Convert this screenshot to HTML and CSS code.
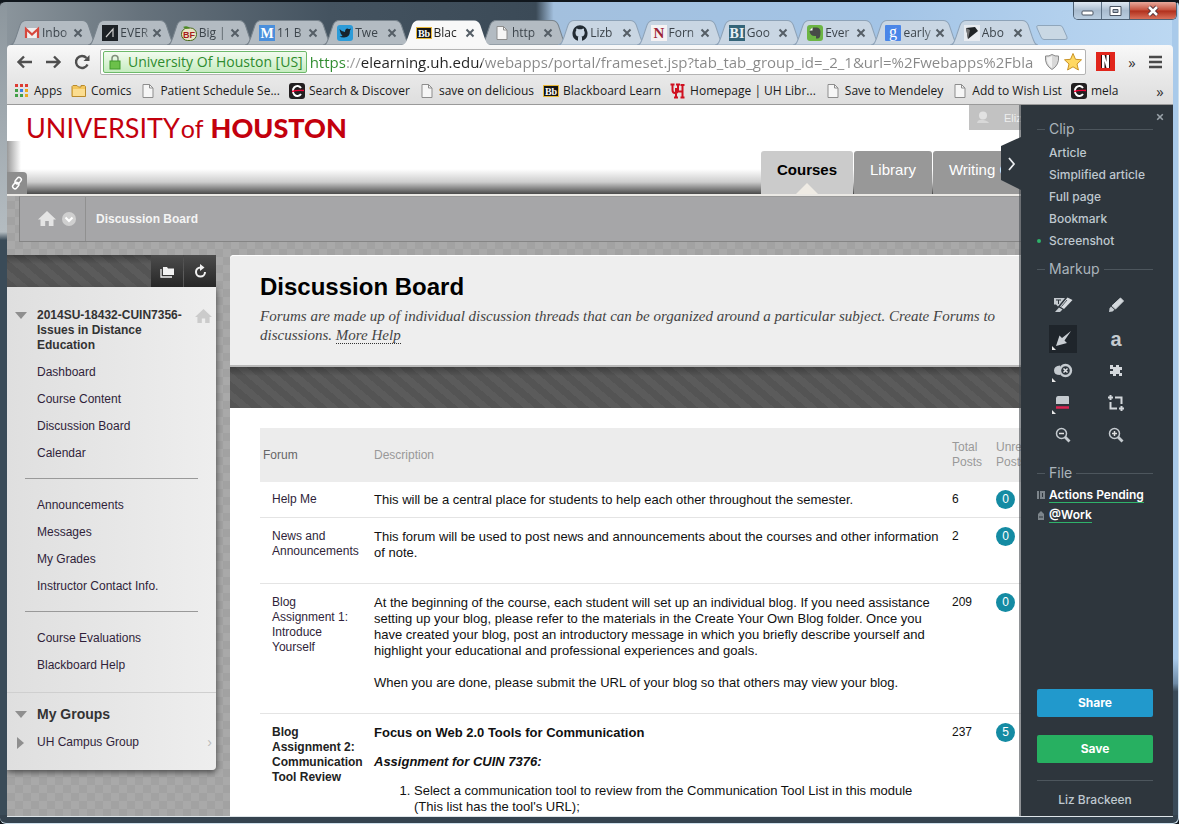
FILE: index.html
```html
<!DOCTYPE html>
<html lang="en">
<head>
<meta charset="utf-8">
<title>Blackboard Learn</title>
<link rel="stylesheet" href="styles.css">
</head>
<body>
<svg class="defs" aria-hidden="true">
  <symbol id="tab" viewBox="0 0 88 25" preserveAspectRatio="none"><path d="M0 25C4 24 4 22 6 17L10 5Q12 .5 16 .5H72Q76 .5 78 5L82 17C84 22 84 24 88 25Z"/></symbol>
  <symbol id="x" viewBox="0 0 10 10"><path d="M1.500 1.500L8.500 8.500M8.500 1.500L1.500 8.500" fill="none" stroke="currentColor" stroke-width="2"/></symbol>
  <symbol id="doc" viewBox="0 0 16 16"><path d="M3 1.500H9.500L13 5V14.500H3Z" fill="#f6f6f6" stroke="#8d8d8d"/><path d="M9.500 1.500V5H13" fill="none" stroke="#8d8d8d"/></symbol>
  <symbol id="bb" viewBox="0 0 16 16"><path d="M0 2H16V14H0Z" fill="#e8b838"/><path d="M1 3H15V13H1Z" fill="#151515"/><text x="8" y="12" text-anchor="middle" font-family="Liberation Serif, serif" font-weight="700" font-size="10" fill="#fff">Bb</text></symbol>
  <symbol id="sd" viewBox="0 0 16 16"><rect width="16" height="16" rx="3" fill="#221f20"/><path d="M12 5A4.500 5 0 1 0 12 11" fill="none" stroke="#fff" stroke-width="2"/><path d="M3 8.500Q7 7 15 7.500" fill="none" stroke="#e03" stroke-width="1.500"/></symbol>
  <symbol id="home" viewBox="0 0 18 16"><path d="M9 0L18 8.500H15.500V15H10.800V10H7.200V15H2.500V8.500H0Z" fill="currentColor"/></symbol>
</svg>

<div class="window">
  <div class="caption">
    <div class="winbtns">
      <button aria-label="Minimize"><svg width="13" height="12"><rect x="1" y="6" width="11" height="4" rx="1" fill="#fff" stroke="#4b5563"/></svg></button>
      <button aria-label="Maximize"><svg width="13" height="12"><path d="M1 1.500H12V10.500H1Z" fill="#fff" stroke="#4b5563"/><path d="M4 4.500H9V7.500H4Z" fill="#aab6c4" stroke="#4b5563"/></svg></button>
      <button class="close" aria-label="Close"><svg width="14" height="12"><path d="M3 2L11 10M11 2L3 10" stroke="#4b3038" stroke-width="4.500"/><path d="M3 2L11 10M11 2L3 10" stroke="#fff" stroke-width="2.500"/></svg></button>
    </div>
  </div>

  <div class="tabstrip">
    <div class="tabs">
      <div class="tab"><svg class="shape"><use href="#tab"/></svg><svg class="fav" viewBox="0 0 16 16"><path d="M1 3H15V13H1Z" fill="#f0eeee"/><path d="M2 13V4L8 9.500L14 4V13" fill="none" stroke="#d6473d" stroke-width="2.200"/></svg><span>Inbo</span><button aria-label="Close tab"><svg><use href="#x"/></svg></button></div>
      <div class="tab"><svg class="shape"><use href="#tab"/></svg><svg class="fav" viewBox="0 0 16 16"><path d="M0 0H16V16H0Z" fill="#1c2126"/><path d="M4 12L11 4V12" fill="none" stroke="#ccc" stroke-width="1.200"/></svg><span>EVER</span><button aria-label="Close tab"><svg><use href="#x"/></svg></button></div>
      <div class="tab"><svg class="shape"><use href="#tab"/></svg><svg class="fav" viewBox="0 0 16 16"><rect x=".5" y="3" width="15" height="12.500" rx="6" fill="#e9e4c4" stroke="#4b6a1c"/><path d="M2 2Q6 0 9 3Q5 5 2 2" fill="#4b8b22"/><text x="8" y="13" text-anchor="middle" font-family="Liberation Sans, sans-serif" font-weight="700" font-size="9" fill="#a61c1c">BF</text></svg><span>Big |</span><button aria-label="Close tab"><svg><use href="#x"/></svg></button></div>
      <div class="tab"><svg class="shape"><use href="#tab"/></svg><svg class="fav" viewBox="0 0 16 16"><path d="M0 0H16V16H0Z" fill="#4a8fdc"/><text x="8" y="13" text-anchor="middle" font-family="Liberation Serif, serif" font-weight="700" font-size="14" fill="#fff">M</text></svg><span>11 B</span><button aria-label="Close tab"><svg><use href="#x"/></svg></button></div>
      <div class="tab"><svg class="shape"><use href="#tab"/></svg><svg class="fav" viewBox="0 0 16 16"><rect width="16" height="16" rx="3" fill="#2c9bd8"/><path d="M2.500 4Q5 7 8 7Q8 3.500 10.500 3.500L12 4.200L14 3.500L13 5.500Q13 12.500 7 12.500Q4 12.500 2.500 11.500Q5 11.300 5.500 10.500Q3.500 9.500 2.500 4Z" fill="#17222b"/></svg><span>Twe</span><button aria-label="Close tab"><svg><use href="#x"/></svg></button></div>
      <div class="tab active"><svg class="shape"><use href="#tab"/></svg><svg class="fav"><use href="#bb"/></svg><span>Blac</span><button aria-label="Close tab"><svg><use href="#x"/></svg></button></div>
      <div class="tab"><svg class="shape"><use href="#tab"/></svg><svg class="fav"><use href="#doc"/></svg><span>http</span><button aria-label="Close tab"><svg><use href="#x"/></svg></button></div>
      <div class="tab light"><svg class="shape"><use href="#tab"/></svg><svg class="fav" viewBox="0 0 16 16"><path d="M8 .3a8 8 0 0 0-2.500 15.400c.4 0 .5-.2.5-.4v-2.500c0-.6.200-1 .5-1.200C4.500 11.300 3.500 10 3.500 7.700c0-.9.300-1.600.8-2.200-.2-.8-.1-1.500.1-2.100.9 0 1.600.4 2.200.9a7 7 0 0 1 3 0c.6-.5 1.300-.9 2.200-.9.200.6.300 1.300.1 2.100.5.600.8 1.300.8 2.200 0 2.300-1.200 3.600-3.200 3.900.3.300.5.700.5 1.200v2.500c0 .2.100.4.500.4A8 8 0 0 0 8 .3Z" fill="#222b33"/></svg><span>Lizb</span><button aria-label="Close tab"><svg><use href="#x"/></svg></button></div>
      <div class="tab light"><svg class="shape"><use href="#tab"/></svg><svg class="fav" viewBox="0 0 16 16"><path d="M0 0H16V16H0Z" fill="#f5f2f3"/><text x="8" y="13" text-anchor="middle" font-family="Liberation Serif, serif" font-weight="700" font-size="15" fill="#9c2438">N</text></svg><span>Forn</span><button aria-label="Close tab"><svg><use href="#x"/></svg></button></div>
      <div class="tab light"><svg class="shape"><use href="#tab"/></svg><svg class="fav" viewBox="0 0 16 16"><path d="M0 0H16V16H0Z" fill="#346478"/><text x="8" y="13" text-anchor="middle" font-family="Liberation Serif, serif" font-weight="700" font-size="14" fill="#e8f0f4">BI</text></svg><span>Goo</span><button aria-label="Close tab"><svg><use href="#x"/></svg></button></div>
      <div class="tab light"><svg class="shape"><use href="#tab"/></svg><svg class="fav" viewBox="0 0 16 16"><rect width="16" height="16" rx="3" fill="#6cb544"/><path d="M2.500 6L6 2.500H10Q13.500 3 13.500 7Q13.500 13.500 11 13.500H9V11H8Q3 11 2.500 6Z" fill="#474c48"/><path d="M2.500 5.500H5.500V2.500Z" fill="#fff"/></svg><span>Ever</span><button aria-label="Close tab"><svg><use href="#x"/></svg></button></div>
      <div class="tab light"><svg class="shape"><use href="#tab"/></svg><svg class="fav" viewBox="0 0 16 16"><rect width="16" height="16" rx="1" fill="#4a86e8"/><text x="8" y="12" text-anchor="middle" font-family="Liberation Serif, serif" font-size="16" fill="#fff">g</text></svg><span>early</span><button aria-label="Close tab"><svg><use href="#x"/></svg></button></div>
      <div class="tab light"><svg class="shape"><use href="#tab"/></svg><svg class="fav" viewBox="0 0 16 16"><path d="M0 0H16V16H0Z" fill="#e7ebf0"/><path d="M2 3L11 2L14 6L4 14Z" fill="#1f2326"/><path d="M2 3L6 5L4 14Z" fill="#777"/></svg><span>Abo</span><button aria-label="Close tab"><svg><use href="#x"/></svg></button></div>
    </div>
    <button class="newtab" aria-label="New tab"><svg width="34" height="17"><path d="M3 1.500H25Q27 1.500 28 4L32 13Q33 15.500 30 15.500H9Q7 15.500 6 13L2 4Q1 1.500 3 1.500Z" fill="#c9d8e4" stroke="#8fa6bb"/></svg></button>
  </div>

  <div class="chrome">
    <div class="toolbar">
      <button aria-label="Back"><svg width="17" height="16"><path d="M8 2.500L2.500 8L8 13.500M3 8H16" fill="none" stroke="#4f4f4f" stroke-width="2.400"/></svg></button>
      <button aria-label="Forward"><svg width="17" height="16"><path d="M9 2.500L14.500 8L9 13.500M14 8H1" fill="none" stroke="#4f4f4f" stroke-width="2.400"/></svg></button>
      <button aria-label="Reload"><svg width="17" height="16"><path d="M13.500 10.500A6 6 0 1 1 12.500 4" fill="none" stroke="#4f4f4f" stroke-width="2.400"/><path d="M15.500 1V7H9.500Z" fill="#4f4f4f"/></svg></button>
      <div class="omnibox">
        <button class="cert"><svg width="12" height="16"><path d="M3 8V4.500Q3 1.500 6 1.500T9 4.500V8" fill="none" stroke="#7f8f7a" stroke-width="1.500"/><rect x="1" y="7" width="10" height="8" fill="#6cc04a" stroke="#3f9a2b"/></svg><span>University Of Houston [US]</span></button>
        <input class="url" type="text" aria-label="Address" value="https://elearning.uh.edu/webapps/portal/frameset.jsp?tab_tab_group_id=_2_1&amp;url=%2Fwebapps%2Fbla">
        <button aria-label="Shield"><svg width="16" height="18"><path d="M8 1.500Q11 3.500 14.500 3Q15.500 12 8 16.500Q.5 12 1.500 3Q5 3.500 8 1.500Z" fill="#d8d8d8" stroke="#8a8a8a"/><path d="M8 3V15Q2.500 11 3 4.500Q6 4.500 8 3Z" fill="#f2f2f2"/></svg></button>
        <button aria-label="Bookmark this page"><svg width="20" height="19"><path d="M10 1.500L12.500 7.300L18.500 7.800L14 12L15.400 18L10 14.800L4.600 18L6 12L1.500 7.800L7.500 7.300Z" fill="#ffd862" stroke="#c99326"/></svg></button>
      </div>
      <button class="ext" aria-label="Netflix"><svg width="19" height="19"><path d="M0 0H19V19H0Z" fill="#e1251b"/><path d="M5 3H14V16H5Z" fill="#2a1010"/><path d="M6 3H8.500L10.500 10V3H13V16H10.500L8.500 9V16H6Z" fill="#fff"/></svg></button>
      <button class="more">»</button>
      <button class="menu" aria-label="Menu"><svg width="14" height="14"><path d="M0 2H13M0 7H13M0 12H13" stroke="#4a4a4a" stroke-width="2.600"/></svg></button>
    </div>
    <nav class="bookmarks">
      <a href="#"><svg viewBox="0 0 16 16"><path d="M1 1h3v3H1zM6 1h3v3H6zM11 1h3v3h-3z" fill="#dd3b32"/><path d="M1 6h3v3H1z" fill="#43a047"/><path d="M6 6h3v3H6z" fill="#3b7ee0"/><path d="M11 6h3v3h-3z" fill="#eba91c"/><path d="M1 11h3v3H1zM6 11h3v3H6z" fill="#43a047"/><path d="M11 11h3v3h-3z" fill="#eba91c"/></svg>Apps</a>
      <a href="#"><svg viewBox="0 0 16 16"><path d="M1 13.500V3.500L2 2.500H6L7.500 4H10V2.500H13.500L14.500 3.500V13.500Z" fill="#f3c65c" stroke="#b98a2c"/><path d="M2 6H14V13H2Z" fill="#fbdd90"/></svg>Comics</a>
      <a href="#"><svg><use href="#doc"/></svg>Patient Schedule Se...</a>
      <a href="#"><svg><use href="#sd"/></svg>Search &amp; Discover</a>
      <a href="#"><svg><use href="#doc"/></svg>save on delicious</a>
      <a href="#"><svg><use href="#bb"/></svg>Blackboard Learn</a>
      <a href="#"><svg viewBox="0 0 16 16"><path d="M2.500 1V7Q2.500 10 5 10T8 7V1M.5 1.500H4.500M6 1.500H10M6 5V15M12.500 2V15M6 8.500H12.500M4 14.500H8M10.500 14.500H14.500M10.500 2H14.500" fill="none" stroke="#cf1020" stroke-width="2"/></svg>Homepage | UH Libr...</a>
      <a href="#"><svg><use href="#doc"/></svg>Save to Mendeley</a>
      <a href="#"><svg><use href="#doc"/></svg>Add to Wish List</a>
      <a href="#"><svg><use href="#sd"/></svg>mela</a>
      <button class="more">»</button>
    </nav>
  </div>

  <div class="viewport">
    <div class="page">
      <header class="banner">
        <div class="brand"><span class="thin">UNIVERSITY</span><span class="of">of</span><span class="fat">HOUSTON</span></div>
        <div class="user"><svg width="12" height="13"><circle cx="6" cy="4.500" r="4" fill="#e2e2e2"/><path d="M0 12Q1 8 6 9T12 12Z" fill="#d8d8d8"/></svg>Elizabeth Brackeen</div>
        <button class="link" aria-label="Quick links"><svg width="14" height="14"><g fill="none" stroke="#fff" stroke-width="1.500"><rect x="6" y="1" width="4.500" height="7" rx="2.200" transform="rotate(40 8 4.500)"/><rect x="3.500" y="6" width="4.500" height="7" rx="2.200" transform="rotate(40 5.700 9.500)"/></g></svg></button>
        <nav class="sections">
          <a class="on" href="#">Courses</a><a href="#">Library</a><a class="wide" href="#">Writing Center</a>
        </nav>
      </header>
      <div class="crumbs">
        <div class="crumbicons"><svg width="18" height="16"><use href="#home"/></svg><svg width="14" height="14"><circle cx="7" cy="7" r="7" fill="#cfcfcf"/><path d="M3.500 5.500L7 9L10.500 5.500" fill="none" stroke="#fff" stroke-width="2"/></svg></div>
        <a href="#">Discussion Board</a>
      </div>
      <div class="columns">
        <aside class="side">
          <div class="sidebar-top">
            <button aria-label="Folder view"><svg width="15" height="13"><path d="M3 2H7L8 3.500H14V10H3Z" fill="#f2f2f2"/><path d="M1 4V12H12" fill="none" stroke="#f2f2f2" stroke-width="1.300"/></svg></button>
            <button aria-label="Refresh"><svg width="13" height="14"><path d="M11 8A4.500 4.500 0 1 1 6.500 3.500" fill="none" stroke="#f2f2f2" stroke-width="2"/><path d="M6 0L10.500 3.500L6 7Z" fill="#f2f2f2"/></svg></button>
          </div>
          <div class="sidebar">
            <h2 class="course"><svg class="tri" width="12" height="7"><path d="M0 0H12L6 7Z" fill="#8f8f8f"/></svg><a href="#">2014SU-18432-CUIN7356-<br>Issues in Distance<br>Education</a><svg class="sidehome" width="17" height="15"><use href="#home"/></svg></h2>
            <ul><li><a href="#">Dashboard</a></li><li><a href="#">Course Content</a></li><li><a href="#">Discussion Board</a></li><li><a href="#">Calendar</a></li></ul>
            <hr>
            <ul><li><a href="#">Announcements</a></li><li><a href="#">Messages</a></li><li><a href="#">My Grades</a></li><li><a href="#">Instructor Contact Info.</a></li></ul>
            <hr>
            <ul><li><a href="#">Course Evaluations</a></li><li><a href="#">Blackboard Help</a></li></ul>
            <div class="groups">
              <h2><svg class="tri" width="12" height="7"><path d="M0 0H12L6 7Z" fill="#8f8f8f"/></svg>My Groups</h2>
              <a href="#"><svg class="tri" width="7" height="12"><path d="M0 0V12L7 6Z" fill="#8f8f8f"/></svg>UH Campus Group<span class="chev">›</span></a>
            </div>
          </div>
        </aside>
        <main class="main">
          <div class="intro">
            <h1>Discussion Board</h1>
            <p>Forums are made up of individual discussion threads that can be organized around a particular subject. Create Forums to<br>discussions. <a href="#">More Help</a></p>
          </div>
          <div class="actionbar"></div>
          <table>
            <thead><tr><th class="c1">Forum</th><th>Description</th><th class="c3">Total Posts</th><th class="c4">Unread<br>Posts</th></tr></thead>
            <tbody>
              <tr class="short"><td class="forum">Help Me</td><td>This will be a central place for students to help each other throughout the semester.</td><td class="num">6</td><td><a class="count" href="#">0</a></td></tr>
              <tr><td class="forum">News and Announcements</td><td>This forum will be used to post news and announcements about the courses and other information<br>of note.</td><td class="num">2</td><td><a class="count" href="#">0</a></td></tr>
              <tr><td class="forum">Blog<br>Assignment 1:<br>Introduce<br>Yourself</td><td>At the beginning of the course, each student will set up an individual blog. If you need assistance<br>setting up your blog, please refer to the materials in the Create Your Own Blog folder. Once you<br>have created your blog, post an introductory message in which you briefly describe yourself and<br>highlight your educational and professional experiences and goals.<br><br>When you are done, please submit the URL of your blog so that others may view your blog.</td><td class="num">209</td><td><a class="count" href="#">0</a></td></tr>
              <tr><td class="forum"><b>Blog<br>Assignment 2:<br>Communication<br>Tool Review</b></td><td class="rich"><h3>Focus on Web 2.0 Tools for Communication</h3><h4>Assignment for CUIN 7376:</h4><ol><li>Select a communication tool to review from the Communication Tool List in this module<br>(This list has the tool's URL);</li></ol></td><td class="num">237</td><td><a class="count" href="#">5</a></td></tr>
            </tbody>
          </table>
        </main>
      </div>
    </div>

    <aside class="clipper">
      <button class="handle" aria-label="Collapse"><svg width="20" height="53"><path d="M20 0L0 9V43L20 53Z" fill="#2e363d"/><path d="M8 21L13 27L8 33" fill="none" stroke="#e8ebee" stroke-width="1.800"/></svg></button>
      <button class="shut" aria-label="Close clipper"><svg width="8" height="8"><use href="#x"/></svg></button>
      <h5>Clip</h5>
      <ul class="modes">
        <li><button>Article</button></li><li><button>Simplified article</button></li><li><button>Full page</button></li><li><button>Bookmark</button></li><li class="sel"><button>Screenshot</button></li>
      </ul>
      <h5>Markup</h5>
      <div class="tools">
        <button aria-label="Highlight text"><svg viewBox="0 0 28 28"><path d="M5 7H16L9 15.500L7 13.500H5Z" fill="#c5cbd0"/><path d="M7 9H12M9.500 9V13" stroke="#2e363d"/><path d="M18.500 6.500L23.500 9L15 18L11 15.500Z" fill="#d8dce0"/><path d="M18 9L12.500 15.500" stroke="#2e363d" stroke-width=".8"/><path d="M10 16.500L13.500 18.500L11 21H6Z" fill="#c5cbd0"/></svg></button>
        <button aria-label="Marker"><svg viewBox="0 0 28 28"><path d="M18.500 7L21.500 10L13.500 18L10 14.800Z" fill="#d3d8dc" stroke="#d3d8dc" stroke-linejoin="round"/><path d="M9 15.500L12.500 18.700L10.500 20.500L7 21L7.500 17.500Z" fill="#c5cbd0"/></svg></button>
        <button class="picked" aria-label="Arrow"><svg viewBox="0 0 28 28"><path d="M22 6L15.500 15.500L18 18L7 21L10.500 10.500L13 13Z" fill="#c9ced3"/><path d="M3 21V25H7Z" fill="#e8e8e8"/></svg></button>
        <button class="letter" aria-label="Text">a</button>
        <button aria-label="Stamp"><svg viewBox="0 0 28 28"><path d="M11 8.500Q5 9 5 13.500T11 18Z" fill="#c5cbd0"/><circle cx="16.500" cy="13.500" r="5.500" fill="#2e363d" stroke="#c5cbd0" stroke-width="2.400"/><path d="M14.500 11.500L18.500 15.500M18.500 11.500L14.500 15.500" stroke="#e2e5e8" stroke-width="1.500"/><path d="M3 21V25H7Z" fill="#e8e8e8"/></svg></button>
        <button aria-label="Pixelate"><svg viewBox="0 0 28 28"><path d="M8 8h3v2h3V8h3v2h3v3h-2v3h2v3h-3v-2h-3v2h-3v-2H8v-3h3v-2H8z" fill="#d3d8dc"/></svg></button>
        <button aria-label="Colour"><svg viewBox="0 0 28 28"><path d="M9 7H19Q20 7 20 8V15H7V9Q7.500 7 9 7Z" fill="#c5cbd0"/><path d="M7 18.500H20" stroke="#dd2452" stroke-width="2.500"/><path d="M3 21V25H7Z" fill="#e8e8e8"/></svg></button>
        <button aria-label="Crop"><svg viewBox="0 0 28 28"><path d="M6 8.500H11M8.500 6V11M13 8.500H19.500V15M8.500 13V19.500H15M19.500 17V22M17 19.500H22" fill="none" stroke="#d3d8dc" stroke-width="2"/></svg></button>
        <button aria-label="Zoom out"><svg viewBox="0 0 28 28"><circle cx="12.500" cy="12.500" r="5" fill="none" stroke="#c5cbd0" stroke-width="1.500"/><path d="M10 12.500H15" stroke="#e0e0e0" stroke-width="1.500"/><path d="M16 16L20.500 20.500" stroke="#c5cbd0" stroke-width="2.800"/></svg></button>
        <button aria-label="Zoom in"><svg viewBox="0 0 28 28"><circle cx="12.500" cy="12.500" r="5" fill="none" stroke="#c5cbd0" stroke-width="1.500"/><path d="M10 12.500H15M12.500 10V15" stroke="#e0e0e0" stroke-width="1.500"/><path d="M16 16L20.500 20.500" stroke="#c5cbd0" stroke-width="2.800"/></svg></button>
      </div>
      <h5>File</h5>
      <div class="file"><svg width="8" height="8"><path d="M0 0H8V8H0Z" fill="#7d858b"/><path d="M2.500 0V8M5.500 2V6" stroke="#2e363d"/></svg><a href="#">Actions Pending</a></div>
      <div class="file"><svg width="8" height="9"><path d="M1 9V3L4 0L7 3V9Z" fill="#7d858b"/><path d="M2 6H6" stroke="#2e363d"/></svg><a href="#">@Work</a></div>
      <div class="foot">
        <button class="share">Share</button>
        <button class="save">Save</button>
        <div class="who">Liz Brackeen</div>
      </div>
    </aside>
  </div>
</div>
</body>
</html>
```
FILE: styles.css
```css
* { box-sizing: border-box; }
body { margin: 0; font-family: "Liberation Sans", Arial, sans-serif; font-size: 12px; background: #10161c; }
button { padding: 0; border: 0; background: none; font: inherit; color: inherit; display: flex; align-items: center; justify-content: center; }
a { color: inherit; text-decoration: none; }
h1, h2, h3, h4, h5, p, ul { margin: 0; padding: 0; }
ul { list-style: none; }
svg { display: block; flex: none; }
.defs { display: none; }

.window {
  height: 100vh; display: flex; flex-direction: column; overflow: hidden;
  padding: 0 5px 6px 7px; border: 1px solid #cfe0ec; border-top: 2px solid #10161c; border-width: 2px 1px 1px 0; border-radius: 6px;
  background:
    linear-gradient(#35434f, #35434f) bottom / 100% 8px no-repeat,
    linear-gradient(#a9caea 0 80%, #6f8ba6 83%, #3a4a58 84%) right / 6px 100% no-repeat,
    linear-gradient(#8c969d 0, #b4bcc1 28%, #3a4b58 29% 100%) left / 7px 100% no-repeat,
    linear-gradient(90deg, #8c969d 0, #66727c 12%, #445360 28%, #3b4a57 45.500%, #a3c0de 47%, #a3c4e6 75%, #bcd8f2 100%);
}
.caption { height: 18px; flex: none; display: flex; justify-content: flex-end; margin-right: -4px; }
.winbtns { display: flex; height: 18px; border: 1px solid #4d6073; border-top: 0; border-radius: 0 0 5px 5px; overflow: hidden; }
.winbtns button { width: 28px; border-right: 1px solid #5c7084; background: linear-gradient(#dfe9f3, #a9bccf 50%, #b9cde0); }
.winbtns .close { width: 46px; border: 0; background: linear-gradient(#e9a99c, #c5503c 48%, #b02f1c 52%, #d9705a); }

.tabstrip { display: flex; flex: none; height: 25px; padding-left: 3px; }
.tabs { display: flex; flex: 0 1 1028px; min-width: 0; }
.tab { position: relative; flex: 1 1 0; min-width: 0; height: 25px; margin-right: -10px; display: grid; grid-template-columns: 16px 1fr 10px; align-items: center; column-gap: 2px; padding: 0 15px 0 14px; isolation: isolate; font: 12px/17px "Open Sans", "Noto Sans", sans-serif; color: #3c444b; }
.tab:last-child { margin-right: 0; }
.tab .shape { position: absolute; inset: 0; width: 100%; height: 25px; z-index: -1; fill: #b3bbc2; stroke: #78838c; stroke-width: 1; }
.tab.light .shape { fill: #c9d6e3; stroke: #8ea3b8; }
.tab.active { z-index: 2; color: #222; }
.tab.active .shape { fill: #f8f8f8; stroke: none; }
.tab .fav { width: 16px; height: 16px; }
.tab span { white-space: nowrap; mask-image: linear-gradient(90deg, #000 70%, rgba(0, 0, 0, .35)); }
.tab button, .tab button svg { width: 10px; height: 10px; color: #555e66; }
.newtab { align-self: center; margin-left: -3px; }

.chrome { flex: none; background: linear-gradient(#f8f8f8, #e9e9e9 50%, #dedede); border-bottom: 1px solid #9a9a9a; border-radius: 4px 4px 0 0; }
.toolbar { display: flex; align-items: center; height: 33px; padding: 0 10px 0 9px; gap: 12px; }
.omnibox { flex: 1; min-width: 0; display: flex; align-items: center; height: 26px; gap: 3px; padding: 0 2px; margin-left: -3px; border: 1px solid #b3b3b3; border-radius: 2px; background: #fff; font: 15px/22px "Open Sans", "Noto Sans", sans-serif; }
.omnibox > button + button { flex: none; }
.cert { flex: none; height: 22px; padding: 0 3px 0 5px; gap: 7px; border: 1px solid #6db96a; border-radius: 2px; background: linear-gradient(#f2fbef, #c6ecc0); color: #2e8b2e; white-space: nowrap; font-size: 14px; }
.url { flex: 1; min-width: 0; height: 22px; padding: 0; border: 0; outline: 0; font: inherit; color: transparent; background: linear-gradient(90deg, #2e8b2e 0 37px, #999 37px 51px, #222 51px 172px, #888 172px); -webkit-background-clip: text; background-clip: text; }
.more { width: 10px; font: 15px/16px "Open Sans", sans-serif; color: #333; }
.ext { margin-left: -2px; }
.bookmarks { display: flex; align-items: center; height: 26px; padding: 0 8px 0 7px; font: 12px/16px "Open Sans", "Noto Sans", sans-serif; color: #1c1c1c; gap: 9px; }
.bookmarks a { display: flex; align-items: center; gap: 4px; white-space: nowrap; }
.bookmarks svg { width: 16px; height: 16px; }
.bookmarks .more { margin-left: auto; }

.viewport { flex: 1; min-height: 0; display: grid; grid-template: minmax(0, 1fr) / minmax(0, 1fr); border-bottom: 1px solid #dfe6ea; }
.page, .clipper { grid-area: 1 / 1; }
.page { overflow: hidden; background: repeating-conic-gradient(#a9a9a9 0 25%, #a2a2a2 0 50%) 0 0 / 16px 16px; }

.banner { position: relative; height: 91px; border-bottom: 2px solid #ebe9e5; background: linear-gradient(transparent 64px, rgba(90, 90, 90, .3) 77px, #4a4a4a 89px), linear-gradient(90deg, #999, transparent 14px) 0 36px no-repeat, #fff; display: grid; grid-template: 46px 43px / 1fr auto; }
.brand { display: flex; align-items: baseline; padding: 5px 0 0 19px; color: #c3000d; font-family: Lato, sans-serif; font-size: 27px; line-height: 36px; }
.thin { font-weight: 400; }
.of { font-size: 25px; margin: 0 7px 0 1px; }
.fat { font-weight: 900; }
.user { justify-self: end; display: flex; gap: 15px; align-items: center; width: 204px; height: 25px; padding-left: 8px; background: #c2c2c2; color: #eee; font-size: 11px; }
.link { align-self: end; width: 20px; height: 22px; background: #8d8d8d; border-radius: 0 4px 0 0; }
.sections { display: flex; width: 412px; gap: 1px; color: #fff; font-size: 15px; line-height: 38px; }
.sections a { background: #989898; padding: 0 16px; border-radius: 3px 3px 0 0; white-space: nowrap; }
.sections .on { background: #cbcbcb; color: #000; font-weight: 700; position: relative; }
.sections .on::after { content: ""; position: absolute; left: 50%; bottom: 0; margin-left: -11px; border: 11px solid transparent; border-top: 0; border-bottom-color: #efebe4; }
.sections .wide { flex: 1; }

.crumbs { display: flex; height: 46px; margin-left: 12px; background: #a6a6a8; border: 1px solid #848484; border-top-color: #999; color: #f4f4f4; font-weight: 700; align-items: center; }
.crumbicons { display: flex; align-items: center; gap: 6px; height: 100%; padding: 0 9px 0 18px; margin-right: 10px; border-right: 1px solid #909090; color: #e4e4e4; }

.columns { display: flex; gap: 14px; padding-top: 13px; align-items: flex-start; }
.side { flex: 0 0 209px; }
.sidebar-top, .actionbar { background: linear-gradient(rgba(0, 0, 0, .25), transparent 9px), repeating-linear-gradient(40deg, #545454 0 7px, #5b5b5b 7px 14px); }
.sidebar-top { display: flex; justify-content: flex-end; gap: 1px; height: 32px; }
.sidebar-top button { width: 32px; background: linear-gradient(#4c4c4c, #272727); }
.sidebar { background: linear-gradient(90deg, #dfdfdf, #eee); color: #333; padding: 21px 0 14px; border-radius: 0 0 4px 0; box-shadow: 0 2px 6px #444; }
.sidebar h2 { font-size: 12px; line-height: 15px; display: flex; align-items: flex-start; }
.course { padding-bottom: 6px; white-space: nowrap; }
.tri { margin: 4px 10px 0 8px; }
.sidehome { color: #cbcbcb; margin: 1px 4px 0 auto; }
.sidebar li, .groups a { line-height: 27px; color: #301f3a; }
.sidebar li { padding-left: 30px; }
.sidebar hr { margin: 11px 18px 13px; border: 0; border-top: 1px solid #999; }
.groups { margin-top: 13px; border-top: 1px solid #cfcfcf; padding-top: 14px; }
.groups h2 { font-size: 14px; padding-bottom: 7px; }
.groups a { display: flex; align-items: center; }
.groups a .tri { margin: 0 13px 0 10px; }
.chev { margin: 0 4px 0 auto; color: #bbb; font-size: 14px; }

.main { flex: 1; min-width: 0; background: #fff; border-radius: 4px 0 0 0; min-height: 600px; }
.intro { height: 112px; padding: 16px 0 0 30px; background: #eee; border-radius: 4px 0 0 0; border-bottom: 2px solid #b9b9b9; border-top: 1px solid #fff; white-space: nowrap; }
h1 { font-size: 24px; line-height: 30px; color: #000; }
.intro p { font: italic 15px/19px "Liberation Serif", Georgia, serif; color: #444; padding-top: 5px; }
.intro p a { border-bottom: 1px dotted #333; }
.actionbar { height: 41px; margin-bottom: 20px; }
table { width: calc(100% - 60px); margin-left: 30px; table-layout: fixed; border-collapse: collapse; }
th { height: 54px; background: #ececec; color: #999; font-weight: 400; line-height: 15px; text-align: left; padding: 0 3px; vertical-align: middle; }
th.c1 { width: 111px; color: #666; }
th.c3 { width: 44px; }
th.c4 { width: 150px; }
td { padding: 11px 3px 22px; border-bottom: 1px solid #e4e4e4; vertical-align: top; line-height: 16px; font-size: 13px; color: #111; white-space: nowrap; }
.short td { padding-top: 10px; padding-bottom: 9px; }
td.forum { padding-left: 12px; line-height: 15px; font-size: 12px; color: #301f3a; white-space: normal; }
td.num { font-size: 12px; line-height: 15px; }
.forum b { color: #222; }
.count { display: block; width: 19px; height: 19px; margin: -2px 0 -3px; border-radius: 50%; background: #148ba3; color: #fff; font-size: 12px; line-height: 19px; text-align: center; }
h3, h4 { font-size: 13px; line-height: 16px; margin-bottom: 13px; }
h4 { font-style: italic; }
.rich ol { margin: 0; padding-left: 40px; }

.clipper { justify-self: end; position: relative; width: 154px; padding: 16px 20px 5px 16px; background: #2e363d; background-clip: padding-box; border-left: 2px solid rgba(70, 75, 80, .6); color: #bfc8cf; font: 500 12px/22px Inter, sans-serif; display: flex; flex-direction: column; }
.handle { position: absolute; left: -20px; top: 32px; }
.shut { position: absolute; right: 9px; top: 8px; color: #9aa3aa; }
h5 { display: flex; align-items: center; gap: 4px; font: 400 14px/16px Inter, sans-serif; color: #aab4bb; }
h5::before, h5::after { content: ""; height: 1px; background: #4d565d; width: 8px; }
h5::after { flex: 1; }
.modes { padding: 5px 0 9px; }
.modes li { display: flex; gap: 8px; }
.modes li::before { content: ""; width: 4px; height: 4px; border-radius: 50%; margin-top: 9px; }
.modes .sel::before { background: #2fb26a; }
.tools { display: grid; grid-template: 30px / 28px 28px; gap: 4px 25px; padding: 14px 0 16px 12px; }
.tools button, .tools svg { width: 28px; height: 28px; }
.tools .picked { background: #1f252b; }
.tools .letter { font: 700 20px/24px "Liberation Sans", sans-serif; color: #c5cbd0; }
.file { display: flex; align-items: center; gap: 4px; height: 20px; color: #fff; font-weight: 600; line-height: 14px; white-space: nowrap; }
.file a { border-bottom: 1px solid #2fb26a; }
h5 + .file { margin-top: 4px; }
.foot { margin-top: auto; display: flex; flex-direction: column; gap: 18px; }
.foot button { height: 28px; border-radius: 2px; color: #fff; font-weight: 700; }
.share { background: #2199cc; }
.save { background: #27b061; }
.who { border-top: 1px solid #4d565d; text-align: center; padding-top: 8px; line-height: 22px; margin-top: -1px; }
```
